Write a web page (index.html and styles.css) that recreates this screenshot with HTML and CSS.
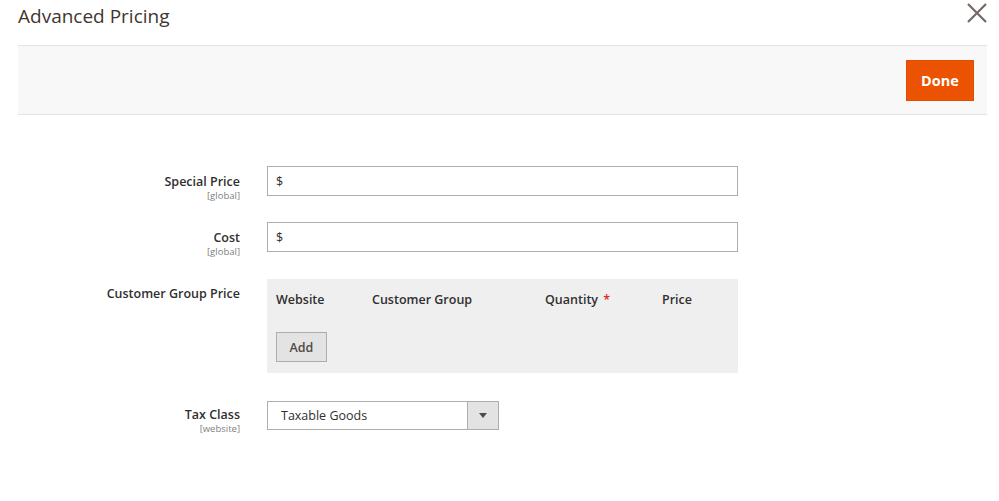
FILE: index.html
```html
<!DOCTYPE html>
<html>
<head>
<meta charset="utf-8">
<link rel="stylesheet" href="styles.css">
</head>
<body>
<div class="modal">
  <header class="modal-header">
    <h1 class="modal-title">Advanced Pricing</h1>
    <button class="close" aria-label="Close">
      <svg width="20" height="20" viewBox="0 0 20 20"><path d="M1 1 L19 19 M19 1 L1 19" stroke="#736963" stroke-width="2.2" fill="none"/></svg>
    </button>
  </header>
  <div class="toolbar">
    <button class="btn-primary">Done</button>
  </div>
  <form class="form">
    <div class="field">
      <div class="label"><span class="label-text">Special Price</span><span class="scope">[global]</span></div>
      <div class="control"><div class="input"><span class="addon">$</span></div></div>
    </div>
    <div class="field">
      <div class="label"><span class="label-text">Cost</span><span class="scope">[global]</span></div>
      <div class="control"><div class="input"><span class="addon">$</span></div></div>
    </div>
    <div class="field">
      <div class="label"><span class="label-text">Customer Group Price</span></div>
      <div class="control">
        <div class="grid">
          <div class="grid-head">
            <span>Website</span>
            <span>Customer Group</span>
            <span>Quantity <em class="req">*</em></span>
            <span>Price</span>
          </div>
          <button type="button" class="btn-add">Add</button>
        </div>
      </div>
    </div>
    <div class="field">
      <div class="label"><span class="label-text">Tax Class</span><span class="scope">[website]</span></div>
      <div class="control">
        <div class="select">
          <span class="select-value">Taxable Goods</span>
          <span class="select-arrow"><span class="tri"></span></span>
        </div>
      </div>
    </div>
  </form>
</div>
</body>
</html>
```
FILE: styles.css
```css
* { box-sizing: border-box; }
html, body { margin: 0; padding: 0; background: #fff; }
body { font-family: "Open Sans", "Noto Sans", sans-serif; color: #303030; width: 999px; height: 501px; overflow: hidden; }
.modal { padding: 0 12px 0 18px; }
.modal-header { display: flex; justify-content: space-between; align-items: flex-start; height: 45px; }
.modal-title { margin: 0; padding-top: 2px; font-size: 19px; font-weight: 400; color: #41362f; line-height: 28px; }
.close { border: 0; background: none; padding: 0; margin: 2px -1px 0 0; width: 22px; height: 22px; display: flex; align-items: center; justify-content: center; }
.toolbar { background: #f8f8f8; border-top: 1px solid #e3e3e3; border-bottom: 1px solid #e3e3e3; height: 70px; display: flex; justify-content: flex-end; align-items: center; padding-right: 13px; }
.btn-primary { background: #eb5202; border: 1px solid #e04f00; color: #fff; font-family: "Open Sans", sans-serif; font-weight: 700; font-size: 14.5px; height: 41px; width: 68px; padding: 0; }
.form { padding-top: 51px; display: flex; flex-direction: column; gap: 26px; }
.field { display: flex; gap: 27px; align-items: flex-start; }
.label { width: 222px; height: 30px; display: flex; flex-direction: column; align-items: flex-end; padding-top: 7px; }
.label-text { font-size: 12.5px; font-weight: 600; line-height: 17px; color: #303030; }
.scope { font-size: 9.5px; line-height: 11px; color: #808080; }
.control { width: 471px; }
.input { height: 30px; border: 1px solid #adadad; display: flex; align-items: center; padding-left: 8px; }
.addon { font-size: 12.5px; color: #303030; }
.grid { background: #efefef; padding: 11px 0 11px 9px; height: 94px; margin-top: 1px; }
.grid-head { display: grid; grid-template-columns: 96px 173px 117px 1fr; font-size: 12.5px; font-weight: 600; color: #303030; line-height: 20px; }
.req { color: #e22626; font-style: normal; margin-left: 2px; }
.btn-add { margin-top: 22px; width: 51px; height: 30px; background: #e3e3e3; border: 1px solid #adadad; color: #514943; font-family: "Open Sans", sans-serif; font-weight: 600; font-size: 12.5px; padding: 0; }
.select { width: 232px; height: 29px; border: 1px solid #adadad; display: flex; margin-top: 2px; }
.select-value { flex: 1; font-size: 12.5px; color: #303030; padding-left: 13px; line-height: 27px; }
.select-arrow { width: 31px; background: #e3e3e3; border-left: 1px solid #adadad; display: flex; align-items: center; justify-content: center; }
.tri { width: 0; height: 0; border-left: 4px solid transparent; border-right: 4px solid transparent; border-top: 5px solid #514943; }
```
